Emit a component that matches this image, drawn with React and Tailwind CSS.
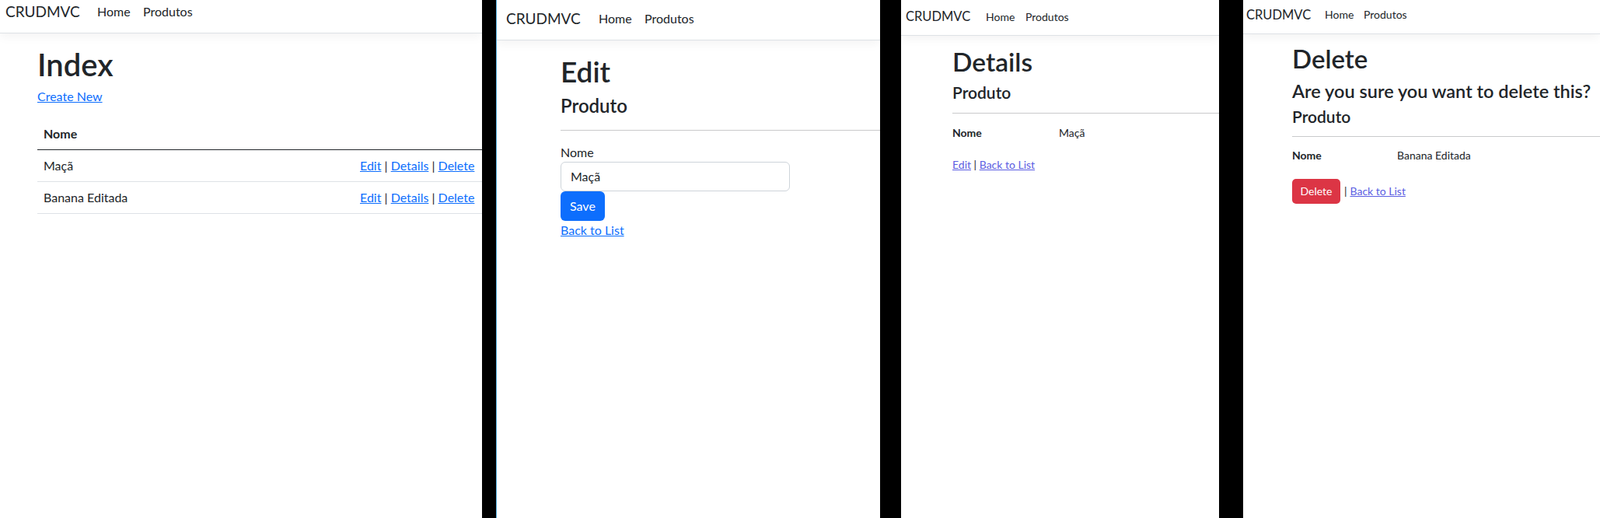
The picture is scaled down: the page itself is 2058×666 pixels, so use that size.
import React from 'react';

// Four screenshots of the same little ASP.NET CRUD app, side by side on black.

function NavBar({ height, pad, brandBox, brandText, brandTop, homeBox, linkText, linkTop }) {
  return (
    <nav
      className={`relative flex items-start border-b border-[#dee2e6] bg-white shadow-[0_4px_12px_rgba(0,0,0,0.05)] ${height} ${pad}`}
    >
      <span className={`shrink-0 whitespace-nowrap text-[#212529] ${brandBox} ${brandText} ${brandTop}`}>
        CRUDMVC
      </span>
      <span className={`shrink-0 whitespace-nowrap text-[#212529] ${homeBox} ${linkText} ${linkTop}`}>Home</span>
      <span className={`shrink-0 whitespace-nowrap text-[#212529] ${linkText} ${linkTop}`}>Produtos</span>
    </nav>
  );
}

function IndexPage() {
  const rows = ['Maçã', 'Banana Editada'];
  return (
    <div className="h-full w-[620px] shrink-0 overflow-hidden bg-white">
      <NavBar
        height="h-[43px]"
        pad="pl-[7px]"
        brandBox="w-[118px]"
        brandText="text-[19px] leading-[30px]"
        brandTop="mt-0"
        homeBox="w-[59px]"
        linkText="text-[16px] leading-[24px]"
        linkTop="mt-[2.5px]"
      />
      <div className="pl-[48px]">
        <h1 className="mt-[15.5px] text-[40px] font-semibold leading-[48px] text-[#212529]">Index</h1>
        <p className="mt-[5.5px] text-[16px] leading-[24px]">
          <a className="text-[#0d6efd] underline">Create New</a>
        </p>
        <div className="mt-[16px] w-[580px] text-[16px] leading-[24px] text-[#212529]">
          <div className="flex border-b border-[#212529]">
            <div className="w-[407px] px-2 py-2 font-bold">Nome</div>
            <div className="flex-1 px-2 py-2" />
          </div>
          {rows.map((r) => (
            <div key={r} className="flex border-b border-[#dee2e6]">
              <div className="w-[407px] px-2 py-2">{r}</div>
              <div className="flex-1 whitespace-nowrap px-2 py-2">
                <a className="text-[#0d6efd] underline">Edit</a> |{' '}
                <a className="text-[#0d6efd] underline">Details</a> |{' '}
                <a className="text-[#0d6efd] underline">Delete</a>
              </div>
            </div>
          ))}
        </div>
      </div>
    </div>
  );
}

function EditPage() {
  return (
    <div className="h-full w-[494px] shrink-0 overflow-hidden border-l border-[#55b2e2] bg-white">
      <NavBar
        height="h-[52px]"
        pad="pl-[12px]"
        brandBox="w-[119px]"
        brandText="text-[19px] leading-[30px]"
        brandTop="mt-[8.5px]"
        homeBox="w-[59px]"
        linkText="text-[16px] leading-[24px]"
        linkTop="mt-[11.5px]"
      />
      <div className="pl-[82px] text-[#212529]">
        <h1 className="mt-[17.5px] text-[37px] font-semibold leading-[44.4px]">Edit</h1>
        <h4 className="mt-[8.4px] text-[24px] font-semibold leading-[28.8px]">Produto</h4>
        <div className="mt-[15.9px] h-px bg-[#c9cacb]" />
        <label className="mt-[15.8px] block text-[16px] leading-[24px]">Nome</label>
        <input
          readOnly
          value="Maçã"
          className="block h-[38px] w-[295px] rounded-[6px] border border-[#ced4da] bg-white px-[12px] font-[Lato,sans-serif] text-[16px] leading-[24px] text-[#212529] outline-none"
        />
        <button className="block h-[38px] rounded-[6px] bg-[#0d6efd] px-[12px] font-[Lato,sans-serif] text-[16px] leading-[24px] text-white">
          Save
        </button>
        <div className="text-[16px] leading-[24px]">
          <a className="text-[#0d6efd] underline">Back to List</a>
        </div>
      </div>
    </div>
  );
}

function DetailsPage() {
  return (
    <div className="h-full w-[409px] shrink-0 overflow-hidden bg-white">
      <NavBar
        height="h-[46px]"
        pad="pl-[6px]"
        brandBox="w-[103px]"
        brandText="text-[16.5px] leading-[26px]"
        brandTop="mt-[8.2px]"
        homeBox="w-[51px]"
        linkText="text-[14px] leading-[21px]"
        linkTop="mt-[10.8px]"
      />
      <div className="pl-[66px] text-[#212529]">
        <h1 className="mt-[12.9px] text-[33.5px] font-semibold leading-[40.2px]">Details</h1>
        <h4 className="mt-[7.4px] text-[21px] font-semibold leading-[25px]">Produto</h4>
        <div className="mt-[13.5px] h-px bg-[#c9cacb]" />
        <dl className="mt-[14.1px] flex text-[14px] leading-[21px]">
          <dt className="w-[137px] font-bold">Nome</dt>
          <dd>Maçã</dd>
        </dl>
        <div className="mt-[20px] text-[14px] leading-[21px]">
          <a className="text-[#5b5de2] underline">Edit</a> |{' '}
          <a className="text-[#5b5de2] underline">Back to List</a>
        </div>
      </div>
    </div>
  );
}

function DeletePage() {
  return (
    <div className="h-full w-[459px] shrink-0 overflow-hidden bg-white">
      <NavBar
        height="h-[44px]"
        pad="pl-[4px]"
        brandBox="w-[101px]"
        brandText="text-[16.5px] leading-[26px]"
        brandTop="mt-[5.5px]"
        homeBox="w-[50px]"
        linkText="text-[14px] leading-[21px]"
        linkTop="mt-[8.4px]"
      />
      <div className="pl-[63px] text-[#212529]">
        <h1 className="mt-[12.4px] text-[33px] font-semibold leading-[39.6px]">Delete</h1>
        <h3 className="mt-[6.8px] whitespace-nowrap text-[23.5px] font-semibold leading-[28.2px]">
          Are you sure you want to delete this?
        </h3>
        <h4 className="mt-[6.5px] text-[21px] font-semibold leading-[25px]">Produto</h4>
        <div className="mt-[12.5px] h-px bg-[#c9cacb]" />
        <dl className="mt-[13.1px] flex text-[14px] leading-[21px]">
          <dt className="w-[135px] font-bold">Nome</dt>
          <dd>Banana Editada</dd>
        </dl>
        <div className="mt-[19.9px] flex items-center text-[14px] leading-[21px]">
          <button className="h-[32px] rounded-[5px] bg-[#dc3545] px-[10.5px] font-[Lato,sans-serif] text-[14px] leading-[21px] text-white">
            Delete
          </button>
          <span className="ml-[5px]">|</span>
          <a className="ml-[4px] text-[#5b5de2] underline">Back to List</a>
        </div>
      </div>
    </div>
  );
}

export default function App() {
  return (
    <div className="flex h-[666px] w-[2058px] overflow-hidden bg-black font-[Lato,sans-serif]">
      <IndexPage />
      <div className="w-[18px] shrink-0" />
      <EditPage />
      <div className="w-[27px] shrink-0" />
      <DetailsPage />
      <div className="w-[31px] shrink-0" />
      <DeletePage />
    </div>
  );
}
